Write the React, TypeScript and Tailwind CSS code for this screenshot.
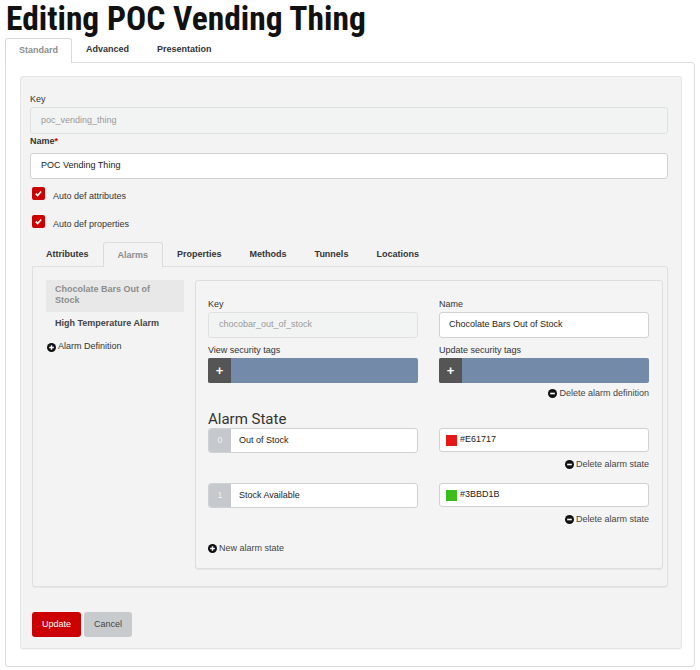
import React from "react";

const topTabs = [
  { name: "Standard", active: true },
  { name: "Advanced", active: false },
  { name: "Presentation", active: false },
];

const innerTabs = ["Attributes", "Alarms", "Properties", "Methods", "Tunnels", "Locations"];

const states = [
  { idx: "0", name: "Out of Stock", color: "#E61717", swatch: "bg-[#e61717]" },
  { idx: "1", name: "Stock Available", color: "#3BBD1B", swatch: "bg-[#3bbd1b]" },
];

function CircleIcon({ minus }: { minus?: boolean }) {
  return (
    <svg width="9" height="9" viewBox="0 0 10 10" className="shrink-0">
      <circle cx="5" cy="5" r="5" fill="#111" />
      {minus ? (
        <path d="M2.4 5h5.2" stroke="#fff" strokeWidth="1.8" />
      ) : (
        <path d="M5 2.4v5.2M2.4 5h5.2" stroke="#fff" strokeWidth="1.6" />
      )}
    </svg>
  );
}

function Checkbox({ label }: { label: string }) {
  return (
    <div className="ml-[2px] flex h-[13px] items-start gap-[8px]">
      <span className="flex size-[13px] items-center justify-center rounded-[2px] bg-[#cc0000]">
        <svg width="9" height="9" viewBox="0 0 10 10">
          <path d="M2 5.2l2 2 4-4.4" fill="none" stroke="#fff" strokeWidth="1.8" />
        </svg>
      </span>
      <span className="mt-[3px] text-[9px] leading-[13px] text-[#333]">{label}</span>
    </div>
  );
}

function Action({ label, minus }: { label: string; minus?: boolean }) {
  return (
    <div className="flex h-[12px] items-center gap-[2px] text-[9px] leading-[12px] text-[#444]">
      <CircleIcon minus={minus} />
      <span>{label}</span>
    </div>
  );
}

function TagBar() {
  return (
    <div className="flex h-[25px] w-[210px] overflow-hidden rounded-[2px] bg-[#738ba8]">
      <span className="flex w-[23px] items-center justify-center bg-[#555] text-[13px] font-bold leading-none text-white">
        +
      </span>
    </div>
  );
}

export default function App() {
  return (
    <div className="h-[670px] w-[700px] overflow-hidden bg-white font-['Liberation_Sans',Arial,sans-serif] text-[#333]">
      {/* Page title */}
      <h1 className="h-[38px] pl-[6px] font-['Liberation_Sans_Narrow','Roboto_Condensed','DejaVu_Sans_Condensed',Roboto,sans-serif] text-[33.5px] font-bold leading-[38px] text-[#111]">
        Editing POC Vending Thing
      </h1>

      {/* Top tabs */}
      <div className="relative z-10 flex h-[24px] pl-[5px]">
        {topTabs.map((t) =>
          t.active ? (
            <div
              key={t.name}
              className="flex h-[25px] items-center rounded-t-[3px] border border-b-0 border-[#d9d9d9] bg-white px-[13px] text-[9px] font-bold text-[#8c8c8c]"
            >
              {t.name}
            </div>
          ) : (
            <div key={t.name} className="flex h-[24px] items-center px-[14px] text-[9px] font-bold text-[#333]">
              {t.name}
            </div>
          )
        )}
      </div>

      <div className="mx-[5px] h-[605px] rounded-b-[3px] rounded-tr-[3px] border border-[#dcdcdc] pl-[14px] pr-[12px] pt-[13px]">
        <div className="h-[573px] rounded-[3px] border border-[#e6e6e6] bg-[#f3f3f3] pl-[9px] pr-[13px] pt-[16px] shadow-[0_1px_1px_rgba(0,0,0,0.05)]">
          {/* Key */}
          <div className="mb-[2px] h-[12px] text-[9px] leading-[12px]">Key</div>
          <div className="flex h-[27px] items-center rounded-[3px] border border-[#e0e2e2] bg-[#f2f3f3] pl-[10px] text-[9px] text-[#9a9a9a]">
            poc_vending_thing
          </div>

          {/* Name */}
          <div className="mb-[6px] mt-[1px] h-[12px] text-[9px] font-bold leading-[12px]">
            Name<span className="text-[#cc0000]">*</span>
          </div>
          <div className="flex h-[26px] items-center rounded-[3px] border border-[#cfd2d4] bg-white pl-[10px] text-[9px] text-[#222]">
            POC Vending Thing
          </div>

          <div className="mt-[8px]">
            <Checkbox label="Auto def attributes" />
          </div>
          <div className="mt-[15px]">
            <Checkbox label="Auto def properties" />
          </div>

          {/* Inner tabs */}
          <div className="relative z-10 ml-[2px] mt-[14px] flex h-[24px]">
            {innerTabs.map((t) =>
              t === "Alarms" ? (
                <div
                  key={t}
                  className="flex h-[25px] items-center rounded-t-[3px] border border-b-0 border-[#dcdcdc] bg-[#f3f3f3] px-[14px] pt-[2px] text-[9px] font-bold text-[#8c8c8c]"
                >
                  {t}
                </div>
              ) : (
                <div key={t} className="flex h-[24px] items-center px-[14px] pt-[1px] text-[9px] font-bold text-[#333]">
                  {t}
                </div>
              )
            )}
          </div>

          <div className="ml-[2px] flex h-[321px] rounded-[3px] rounded-tl-none border border-[#e0e0e0] bg-[#f3f3f3] pl-[13px] pt-[13px] shadow-[0_1px_1px_rgba(0,0,0,0.05)]">
            {/* Alarm list */}
            <div className="w-[138px] text-[9px] font-bold">
              <div className="h-[32px] bg-[#e8e8e8] pl-[9px] pr-[9px] pt-[4px] leading-[11px] text-[#8d8d8d]">
                Chocolate Bars Out of Stock
              </div>
              <div className="flex h-[24px] items-center pl-[9px] text-[#444]">High Temperature Alarm</div>
              <div className="mt-[5px] flex h-[12px] items-center gap-[2px] pl-[1px] font-normal text-[#333]">
                <CircleIcon />
                <span>Alarm Definition</span>
              </div>
            </div>

            {/* Alarm detail */}
            <div className="ml-[11px] h-[289px] w-[468px] rounded-[3px] border border-[#dedede] bg-[#f4f4f4] pl-[12px] pr-[13px] pt-[17px] shadow-[0_1px_1px_rgba(0,0,0,0.06)]">
              <div className="flex h-[12px] gap-[21px] text-[9px] leading-[12px]">
                <span className="w-[210px]">Key</span>
                <span className="w-[210px]">Name</span>
              </div>
              <div className="mt-[2px] flex gap-[21px]">
                <div className="flex h-[26px] w-[210px] items-center rounded-[3px] border border-[#e0e2e2] bg-[#f2f3f3] pl-[10px] text-[9px] text-[#9a9a9a]">
                  chocobar_out_of_stock
                </div>
                <div className="flex h-[26px] w-[210px] items-center rounded-[3px] border border-[#cfd2d4] bg-white pl-[9px] text-[9px] text-[#222]">
                  Chocolate Bars Out of Stock
                </div>
              </div>
              <div className="mt-[6px] flex h-[12px] gap-[21px] text-[9px] leading-[12px]">
                <span className="w-[210px]">View security tags</span>
                <span className="w-[210px]">Update security tags</span>
              </div>
              <div className="mt-[2px] flex gap-[21px]">
                <TagBar />
                <TagBar />
              </div>
              <div className="mt-[4px] flex justify-end">
                <Action label="Delete alarm definition" minus />
              </div>

              <div className="mt-[11px] h-[18px] font-['Roboto',sans-serif] text-[15px] leading-[18px] text-[#333]">
                Alarm State
              </div>

              {states.map((s, i) => (
                <div key={s.idx} className={i === 0 ? "" : "mt-[13px]"}>
                  <div className="flex gap-[21px]">
                    <div className="flex h-[25px] w-[210px] overflow-hidden rounded-[3px] border border-[#cfd2d4] bg-white text-[9px]">
                      <span className="flex w-[22px] items-center justify-center bg-[#c5c9cd] text-[#eef0f2]">{s.idx}</span>
                      <span className="flex items-center pl-[8px] text-[#222]">{s.name}</span>
                    </div>
                    <div className="flex h-[24px] w-[210px] items-center gap-[3px] rounded-[3px] border border-[#cfd2d4] bg-white pl-[6px] text-[9px] text-[#222]">
                      <span className={`size-[11px] ${s.swatch}`} />
                      <span>{s.color}</span>
                    </div>
                  </div>
                  <div className="mt-[5px] flex justify-end">
                    <Action label="Delete alarm state" minus />
                  </div>
                </div>
              ))}

              <div className="mt-[17px]">
                <Action label="New alarm state" />
              </div>
            </div>
          </div>

          {/* Buttons */}
          <div className="ml-[2px] mt-[25px] flex gap-[3px] text-[9px]">
            <button className="h-[25px] w-[49px] rounded-[3px] bg-[#cc0000] text-white">Update</button>
            <button className="h-[25px] w-[48px] rounded-[3px] bg-[#c8cbce] text-[#444]">Cancel</button>
          </div>
        </div>
      </div>
    </div>
  );
}
